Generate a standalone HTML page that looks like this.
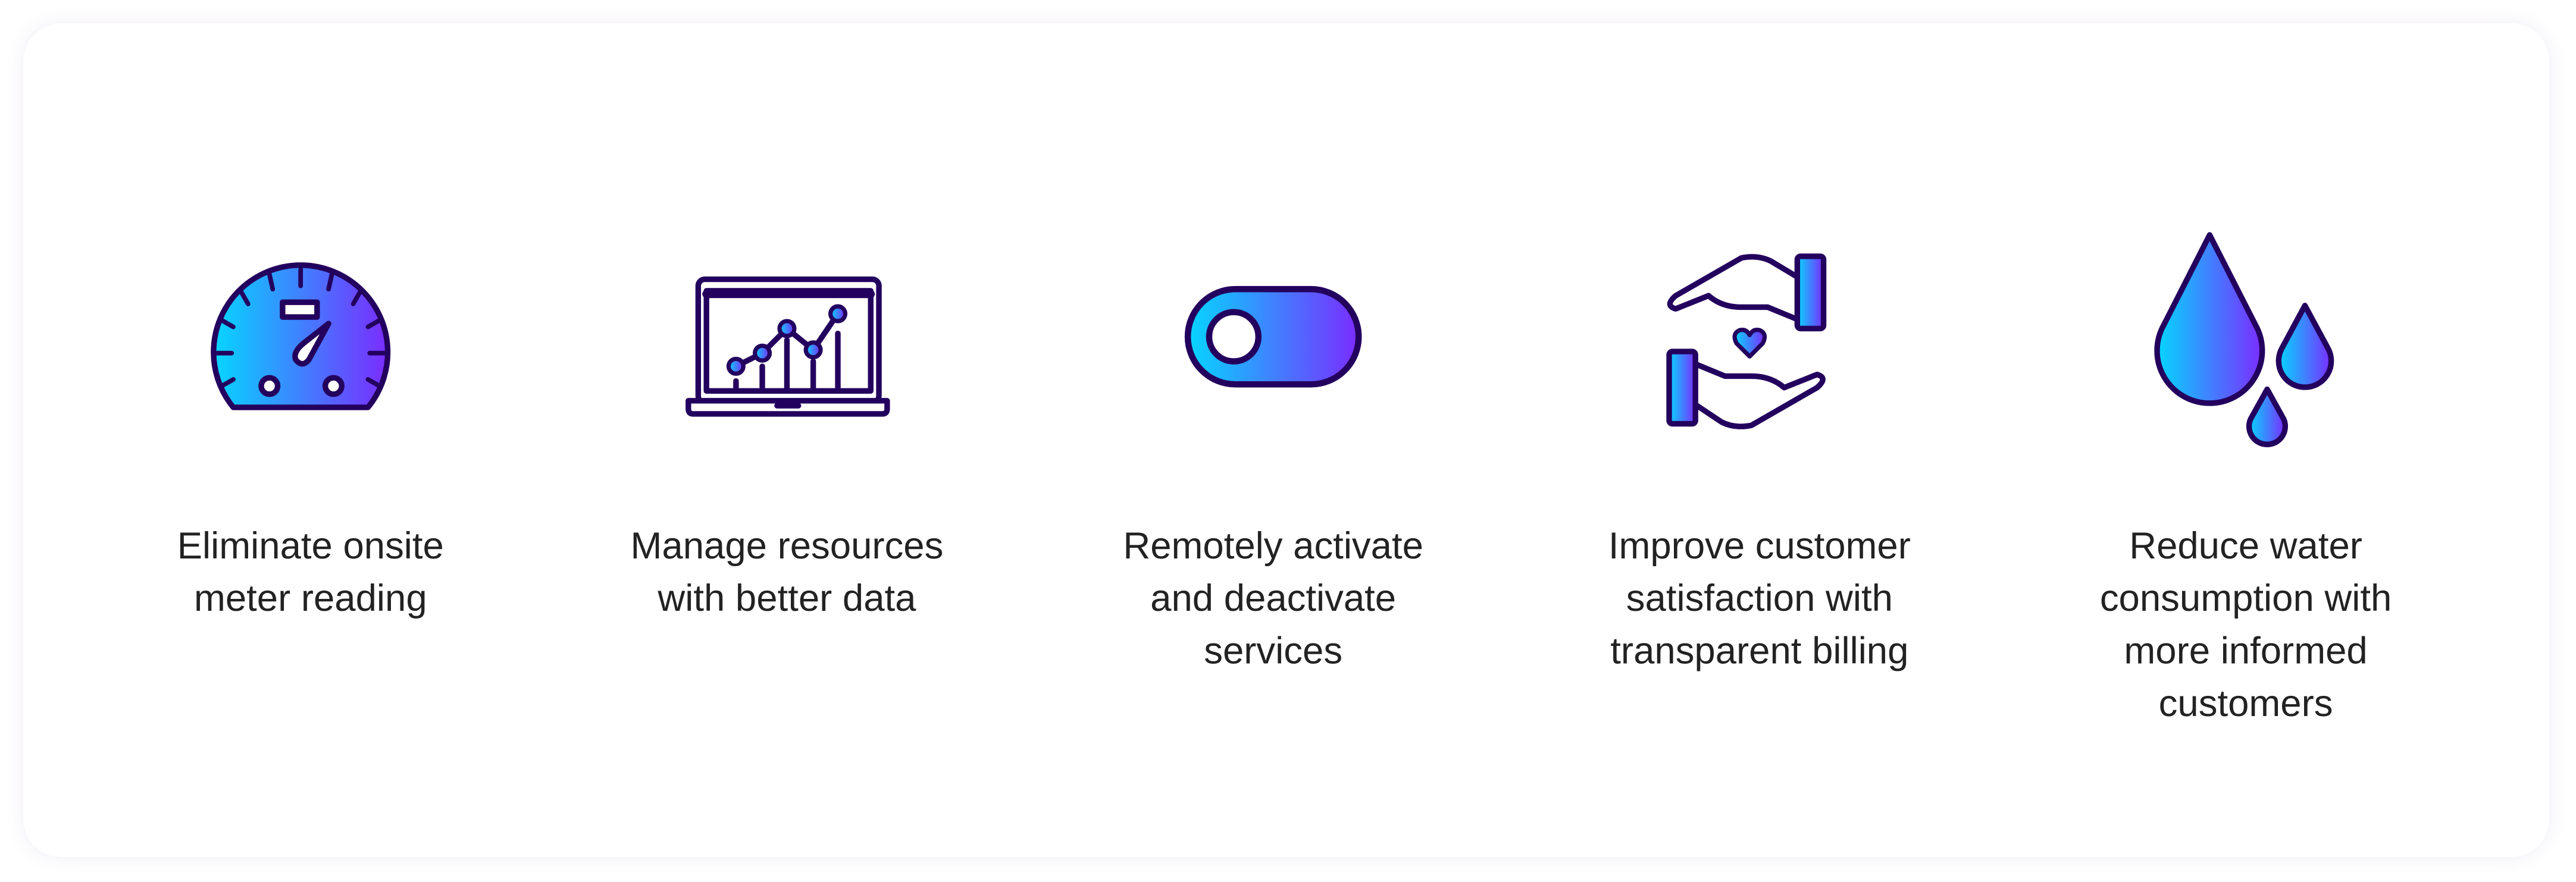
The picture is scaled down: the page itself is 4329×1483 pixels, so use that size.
<!DOCTYPE html>
<html><head><meta charset="utf-8"><style>
html,body{margin:0;padding:0;background:#fff;width:4329px;height:1483px;overflow:hidden}
.card{position:absolute;left:39px;top:39px;width:4245px;height:1402px;border-radius:64px;background:#fff;box-shadow:0 0 30px rgba(120,100,160,0.12)}
svg{position:absolute;left:0;top:0}
</style></head><body>
<div class="card"></div>
<svg width="4329" height="1483" viewBox="0 0 1568 537" xmlns="http://www.w3.org/2000/svg">
<defs>
<linearGradient id="g" x1="0" x2="1" y1="0" y2="0"><stop offset="0" stop-color="#05d6ff"/><stop offset="1" stop-color="#7b2cff"/></linearGradient>
</defs>
<g stroke="#23005e" stroke-width="3.4" stroke-linecap="round" stroke-linejoin="round" fill="none">
<!-- gauge -->
<path d="M142,248 A53,53 0 1 1 224,248 Z" fill="url(#g)"/>
<g stroke-width="2.8">
<line x1="183" y1="164" x2="183" y2="174"/>
<line x1="164" y1="167" x2="166" y2="176"/><line x1="202" y1="167" x2="200" y2="176"/>
<line x1="147" y1="178" x2="151" y2="185"/><line x1="219" y1="178" x2="215" y2="185"/>
<line x1="135" y1="195" x2="142" y2="199"/><line x1="231" y1="195" x2="224" y2="199"/>
<line x1="132" y1="215" x2="141" y2="215"/><line x1="234" y1="215" x2="225" y2="215"/>
<line x1="135" y1="235" x2="142" y2="231"/><line x1="231" y1="235" x2="224" y2="231"/>
</g>
<rect x="172" y="184" width="21" height="9" fill="#fff"/>
<path d="M200,197 L186,208 Q178,214 180,219 Q184,224 188,219 Z" fill="#fff"/>
<circle cx="164" cy="235" r="5" fill="#fff"/><circle cx="203" cy="235" r="5" fill="#fff"/>
<!-- laptop -->
<rect x="425" y="170" width="110" height="75" rx="4" fill="#fff"/>
<rect x="430" y="177" width="100" height="61" fill="#fff"/>
<line x1="430" y1="179" x2="530" y2="179" stroke-width="5"/>
<path d="M419,244 L540,244 L540,249 Q540,252 537,252 L422,252 Q419,252 419,249 Z" fill="#fff"/>
<line x1="473" y1="247" x2="486" y2="247"/>
<line x1="448" y1="232" x2="448" y2="236"/><line x1="464" y1="223" x2="464" y2="236"/>
<line x1="479" y1="207" x2="479" y2="236"/><line x1="495" y1="220" x2="495" y2="236"/>
<line x1="510" y1="203" x2="510" y2="236"/>
<polyline points="448,223 464,215 479,200 495,213 510,191"/>
<g fill="url(#g)" stroke-width="2.6"><circle cx="448" cy="223" r="4.5"/><circle cx="464" cy="215" r="4.5"/><circle cx="479" cy="200" r="4.5"/><circle cx="495" cy="213" r="4.5"/><circle cx="510" cy="191" r="4.5"/></g>
<!-- toggle -->
<rect x="723" y="176" width="104" height="58" rx="29" fill="url(#g)" stroke-width="3.8"/>
<circle cx="751" cy="205" r="15" fill="#fff" stroke-width="3.8"/>
<!-- hands -->
<rect x="1094" y="156" width="16" height="44" rx="2" fill="url(#g)"/>
<path d="M1093,168 L1078,159 Q1070,155 1060,157 L1020,180 Q1013,186 1020,188 L1040,180 Q1048,187 1060,187 L1076,187 L1093,194"/>
<rect x="1016" y="214" width="16" height="44" rx="2" fill="url(#g)"/>
<path d="M1033,247 L1048,257 Q1056,261 1066,259 L1106,236 Q1113,230 1106,228 L1086,236 Q1078,229 1066,229 L1050,229 L1033,222"/>
<path d="M1065,217 L1057,209 Q1054,203 1059,201 Q1063,200 1065,204 Q1067,200 1071,201 Q1076,203 1073,209 Z" fill="url(#g)" stroke-width="2.6"/>
<!-- drops -->
<path d="M1345,143 L1317,198 A32,32 0 1 0 1373,198 Z" fill="url(#g)"/>
<path d="M1403,186 L1389,212 A16,16 0 1 0 1417,212 Z" fill="url(#g)"/>
<path d="M1380,237 L1370,255 A11,11 0 1 0 1390,255 Z" fill="url(#g)"/>
</g>
<g font-family="Liberation Sans, sans-serif" font-size="23" fill="#222" text-anchor="middle">
<text x="189" y="340">Eliminate onsite</text><text x="189" y="372">meter reading</text>
<text x="479" y="340">Manage resources</text><text x="479" y="372">with better data</text>
<text x="775" y="340">Remotely activate</text><text x="775" y="372">and deactivate</text><text x="775" y="404">services</text>
<text x="1071" y="340">Improve customer</text><text x="1071" y="372">satisfaction with</text><text x="1071" y="404">transparent billing</text>
<text x="1367" y="340">Reduce water</text><text x="1367" y="372">consumption with</text><text x="1367" y="404">more informed</text><text x="1367" y="436">customers</text>
</g>
</svg>
</body></html>
